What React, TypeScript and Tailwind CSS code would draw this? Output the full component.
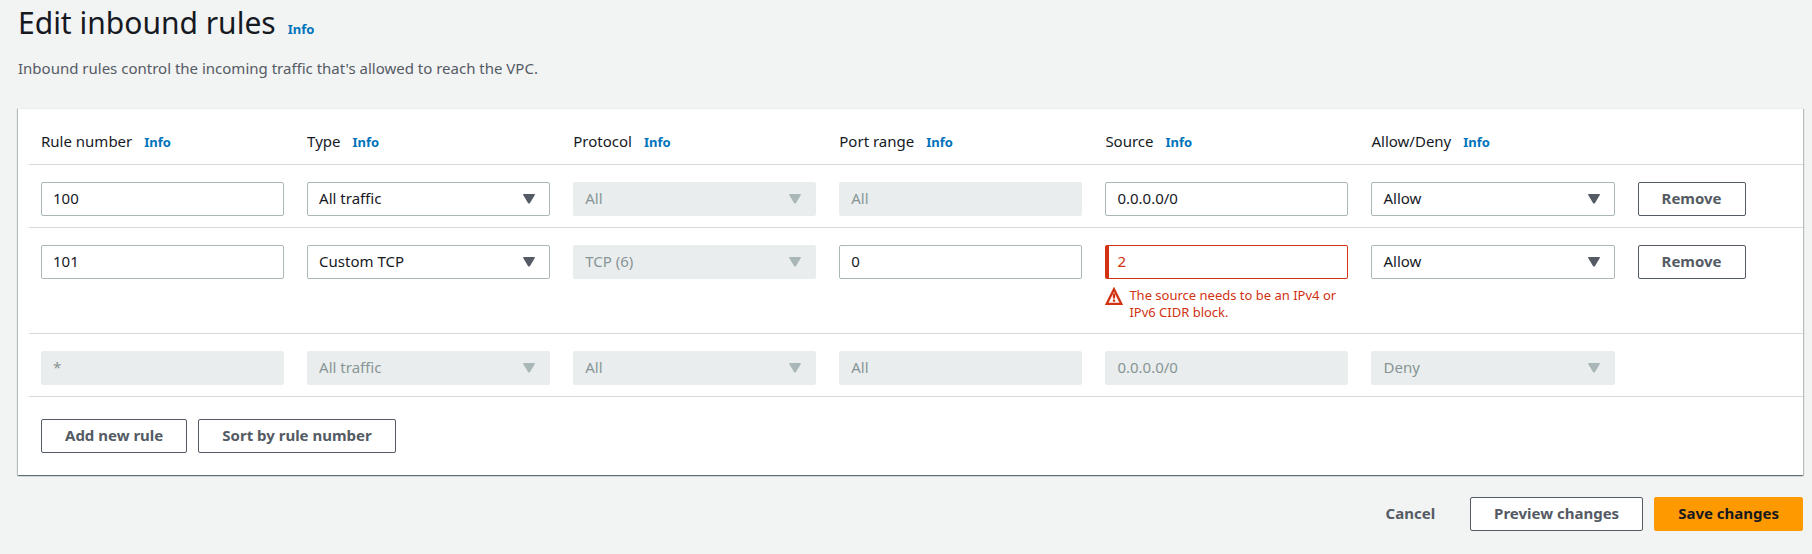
import { useState, type ReactNode } from "react";

type Field = { kind: "input" | "select"; value: string; disabled?: boolean; error?: string };
type Rule = { id: string; fields: Field[]; removable: boolean };

const columns = ["Rule number", "Type", "Protocol", "Port range", "Source", "Allow/Deny"];

const initialRules: Rule[] = [
  {
    id: "100",
    removable: true,
    fields: [
      { kind: "input", value: "100" },
      { kind: "select", value: "All traffic" },
      { kind: "select", value: "All", disabled: true },
      { kind: "input", value: "All", disabled: true },
      { kind: "input", value: "0.0.0.0/0" },
      { kind: "select", value: "Allow" },
    ],
  },
  {
    id: "101",
    removable: true,
    fields: [
      { kind: "input", value: "101" },
      { kind: "select", value: "Custom TCP" },
      { kind: "select", value: "TCP (6)", disabled: true },
      { kind: "input", value: "0" },
      { kind: "input", value: "2", error: "The source needs to be an IPv4 or IPv6 CIDR block." },
      { kind: "select", value: "Allow" },
    ],
  },
  {
    id: "default",
    removable: false,
    fields: [
      { kind: "input", value: "*", disabled: true },
      { kind: "select", value: "All traffic", disabled: true },
      { kind: "select", value: "All", disabled: true },
      { kind: "input", value: "All", disabled: true },
      { kind: "input", value: "0.0.0.0/0", disabled: true },
      { kind: "select", value: "Deny", disabled: true },
    ],
  },
];

function InfoLink() {
  return (
    <a href="#info" className="text-[13px] font-bold text-[#0073bb] hover:underline">
      Info
    </a>
  );
}

function Button({ children, variant = "normal", onClick }: { children: ReactNode; variant?: "normal" | "primary" | "link"; onClick?: () => void }) {
  const look = {
    normal: "border-[#545b64] bg-white text-[#545b64]",
    primary: "border-[#ff9900] bg-[#ff9900] text-[#16191f]",
    link: "border-transparent text-[#545b64]",
  }[variant];
  return (
    <button type="button" onClick={onClick} className={`h-[34px] rounded-xs border px-[23px] pb-0.5 text-[15px] leading-5 font-bold whitespace-nowrap ${look}`}>
      {children}
    </button>
  );
}

function WarningIcon() {
  return (
    <svg viewBox="0 0 18 18" className="size-[18px] shrink-0" fill="none" stroke="#d13212" strokeWidth="2.3" aria-hidden="true">
      <path d="M9 2.2 16.2 16.8H1.8L9 2.2Z" />
      <path d="M9 6.5v5M9 12.6v2.2" />
    </svg>
  );
}

function FieldControl({ field, label, id }: { field: Field; label: string; id: string }) {
  const [value, setValue] = useState(field.value);
  const tone = field.disabled
    ? "border-[#eaeded] bg-[#eaeded] text-[#879596]"
    : field.error
      ? "border-[#d13212] border-l-4 bg-white text-[#d13212]"
      : "border-[#aab7b8] bg-white text-[#16191f]";
  const pad = field.error ? "pr-3 pl-2" : "px-[11px]";

  if (field.kind === "select") {
    return (
      <div className="relative">
        <select id={id} aria-label={label} value={value} disabled={field.disabled} onChange={(e) => setValue(e.target.value)} className={`block h-[34px] w-full appearance-none rounded-xs border pb-0.5 text-[15px] leading-5 opacity-100 ${pad} ${tone}`}>
          <option>{field.value}</option>
        </select>
        <svg viewBox="0 0 12 10" className={`pointer-events-none absolute top-3 right-[15px] h-[10px] w-3 ${field.disabled ? "fill-[#aab7b8]" : "fill-[#545b64]"}`} aria-hidden="true">
          <path d="M0.6 0h10.8q.9 0 .4 1L7 9q-1 1.2-2 0L.2 1Q-.3 0 .6 0Z" />
        </svg>
      </div>
    );
  }

  return (
    <>
      <input id={id} aria-label={label} aria-invalid={field.error ? true : undefined} aria-describedby={field.error ? `${id}-error` : undefined} value={value} disabled={field.disabled} onChange={(e) => setValue(e.target.value)} className={`block h-[34px] w-full rounded-xs border pb-0.5 text-[15px] leading-5 ${pad} ${tone}`} />
      {field.error && (
        <div id={`${id}-error`} className="mt-2 flex items-start gap-[6px] pb-px text-[13px] leading-[17px] text-[#d13212]">
          <WarningIcon />
          <span>{field.error}</span>
        </div>
      )}
    </>
  );
}

export default function App() {
  const [rules, setRules] = useState(initialRules);

  return (
    <main className="min-h-screen bg-[#f2f3f3] pr-[9px] pb-[22px] pl-[18px] font-['Noto_Sans',sans-serif] text-[15px] leading-5 text-[#16191f]">
      <header>
        <div className="flex items-baseline gap-3 pt-[3px]">
          <h1 className="text-[30px] leading-10">Edit inbound rules</h1>
          <InfoLink />
        </div>
        <p className="mt-[15px] text-[#545b64]">Inbound rules control the incoming traffic that's allowed to reach the VPC.</p>
      </header>

      <section className="mt-[30px] border-t border-[#eaeded] bg-white pl-[11px] shadow-[0_1px_1px_0_rgba(0,28,36,0.4),1px_1px_1px_0_rgba(0,28,36,0.2),-1px_1px_1px_0_rgba(0,28,36,0.2)]">
        <table className="w-full table-fixed border-collapse">
          <thead>
            <tr className="border-b border-[#d5dbdb]">
              {columns.map((c) => (
                <th key={c} scope="col" className="w-[15%] pt-[22px] pr-[11px] pb-3 pl-3 text-left font-normal">
                  <span className="flex items-baseline gap-3">
                    {c}
                    <InfoLink />
                  </span>
                </th>
              ))}
              <td />
            </tr>
          </thead>
          <tbody>
            {rules.map((rule) => (
              <tr key={rule.id} className="border-b border-[#d5dbdb] align-top">
                {rule.fields.map((field, i) => (
                  <td key={columns[i]} className="pt-[17px] pr-[11px] pb-[11px] pl-3">
                    <FieldControl field={field} label={columns[i]} id={`${rule.id}-${i}`} />
                  </td>
                ))}
                <td className="pt-[17px] pr-[11px] pb-[11px] pl-3">
                  {rule.removable && <Button onClick={() => setRules(rules.filter((r) => r.id !== rule.id))}>Remove</Button>}
                </td>
              </tr>
            ))}
          </tbody>
        </table>
        <div className="flex gap-[11px] px-3 py-[22px]">
          <Button>Add new rule</Button>
          <Button>Sort by rule number</Button>
        </div>
      </section>

      <footer className="mt-[22px] flex justify-end gap-[11px]">
        <Button variant="link">Cancel</Button>
        <Button>Preview changes</Button>
        <Button variant="primary">Save changes</Button>
      </footer>
    </main>
  );
}
